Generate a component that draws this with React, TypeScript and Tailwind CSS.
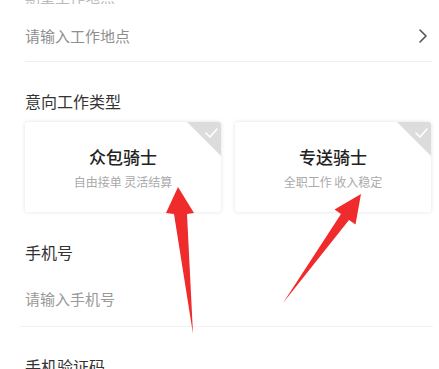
import React from 'react';

const font = { fontFamily: '"Noto Sans CJK SC", "Noto Sans", sans-serif' };

const Corner = () => (
  <svg className="absolute top-0 right-0" width="34" height="34" viewBox="0 0 34 34">
    <polygon points="0,0 34,0 34,34" fill="#dcdcdc" />
    <polyline points="19,11 23,15 30,7" fill="none" stroke="#fff" strokeWidth="1.6" strokeLinecap="round" strokeLinejoin="round" />
  </svg>
);

const JobCard = ({ title, sub }: { title: string; sub: string }) => (
  <div className="relative flex h-[90px] w-[196px] flex-col items-center overflow-hidden rounded-[3px] bg-white pt-[24px] shadow-[0_0_4px_rgba(0,0,0,0.12)]">
    <Corner />
    <div className="text-[17px] leading-[22px] font-medium text-[#222]">{title}</div>
    <div className="mt-[6px] text-[12px] leading-[16px] text-[#aaa]">{sub}</div>
  </div>
);

export default function App() {
  return (
    <div className="relative h-[369px] w-[439px] overflow-hidden bg-white" style={font}>
      <div className="pl-[25px]">
        {/* previous field's text, scrolled mostly out of view */}
        <div className="flex h-[4px] items-end overflow-hidden">
          <span className="translate-y-[3px] text-[15px] leading-[20px] text-[#bbb]">期望工作地点</span>
        </div>

        <div className="mr-[7px] flex h-[58px] items-center justify-between border-b border-[#efefef] pt-[6px]">
          <span className="text-[15px] leading-[20px] text-[#8f8f8f]">请输入工作地点</span>
          <svg width="10" height="16" viewBox="0 0 10 16" className="mr-[4px]">
            <polyline points="2,2 8,8 2,14" fill="none" stroke="#555" strokeWidth="1.6" strokeLinecap="round" strokeLinejoin="round" />
          </svg>
        </div>

        <div className="pt-[27px] text-[16px] leading-[24px] text-[#333]">意向工作类型</div>

        <div className="mt-[9px] flex gap-[14px]">
          <JobCard title="众包骑士" sub="自由接单 灵活结算" />
          <JobCard title="专送骑士" sub="全职工作 收入稳定" />
        </div>

        <div className="mt-[28px] text-[16px] leading-[24px] text-[#333]">手机号</div>

        <div className="mr-[6px] -ml-[5px] mt-[23px] border-b border-[#f2f2f2] pb-[15px] pl-[5px] text-[15px] leading-[24px] text-[#999]">
          请输入手机号
        </div>

        <div className="mt-[27px] text-[16px] leading-[24px] text-[#333]">手机验证码</div>
      </div>

      <svg className="absolute inset-0" width="439" height="369" viewBox="0 0 439 369">
        <polygon points="178,187 194,213 187,214 193,334 174,214 166,213" fill="#ef2b2b" />
        <polygon points="361,194 355.5,224.5 349,220 283,303 341,214 334.5,209.5" fill="#ef2b2b" />
      </svg>
    </div>
  );
}
